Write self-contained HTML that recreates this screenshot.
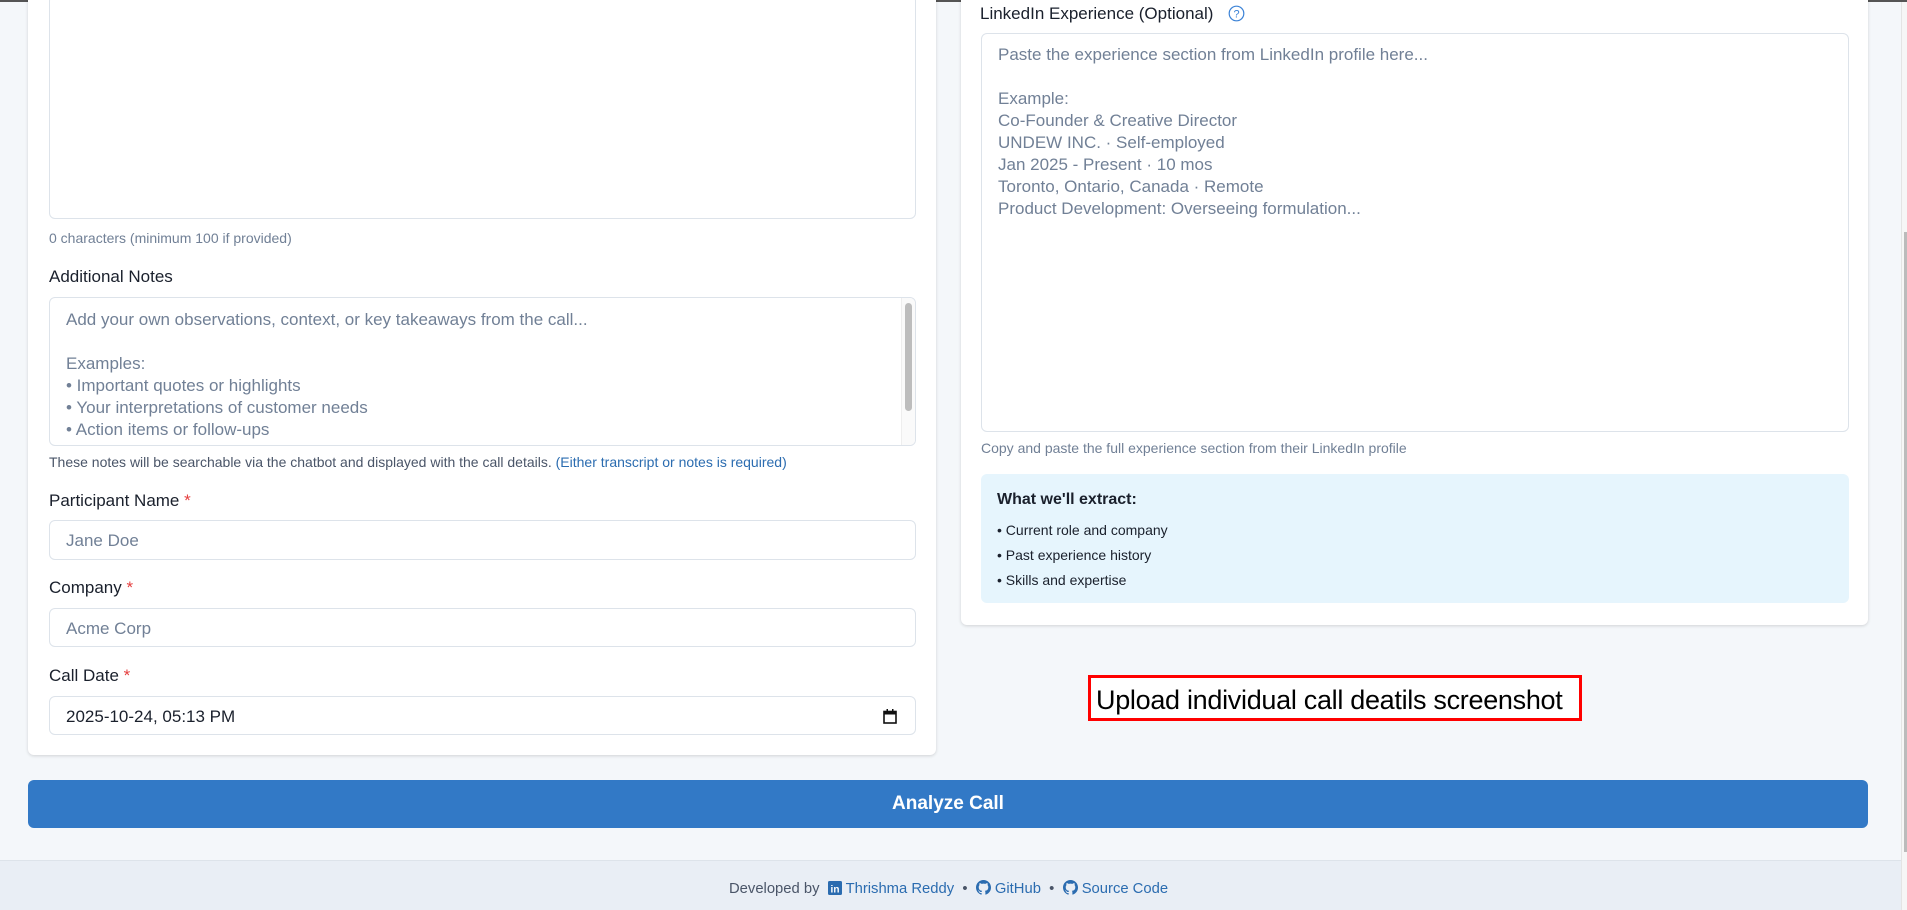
<!DOCTYPE html>
<html><head><meta charset="utf-8"><style>
*{box-sizing:border-box;margin:0;padding:0}
body{width:1907px;height:910px;overflow:hidden;background:#f4f7fa;font-family:"Liberation Sans",sans-serif;position:relative;color:#1a202c}
.a{position:absolute}
.card{background:#fff;border-radius:6px;box-shadow:0 1px 3px rgba(0,0,0,.15)}
.ta{border:1px solid #dde3ea;border-radius:6px;background:#fff}
.ph{color:#718096;font-size:17px;line-height:22px}
.lbl{font-size:17px;color:#1a202c}
.req{color:#e53e3e}
.help{font-size:14px;color:#4a5568}
</style></head><body>
<div class="a" style="left:0;top:0;width:1907px;height:2px;background:#555"></div>
<div class="a" style="left:1901px;top:2px;width:6px;height:908px;background:#f6f6f6;border-left:1px solid #e4e4e4"></div>
<div class="a" style="left:1904px;top:232px;width:3px;height:620px;background:#bbb"></div>

<div class="a card" style="left:28px;top:-10px;width:908px;height:765px"></div>
<div class="a ta" style="left:49px;top:-5px;width:867px;height:224px"></div>
<div class="a help" style="left:49px;top:230px;color:#718096">0 characters (minimum 100 if provided)</div>
<div class="a lbl" style="left:49px;top:267px">Additional Notes</div>
<div class="a ta" style="left:49px;top:297px;width:867px;height:149px;overflow:hidden">
<div class="ph" style="position:absolute;left:16px;top:11px;white-space:pre">Add your own observations, context, or key takeaways from the call...

Examples:
• Important quotes or highlights
• Your interpretations of customer needs
• Action items or follow-ups
• Context not captured in the transcript</div>
<div style="position:absolute;right:0;top:0;width:14px;height:100%;background:#fafafa;border-left:1px solid #eee"></div>
<div style="position:absolute;right:3px;top:5px;width:7px;height:108px;background:#bdbdbd;border-radius:4px"></div>
</div>
<div class="a help" style="left:49px;top:454px">These notes will be searchable via the chatbot and displayed with the call details. <span style="color:#2b6cb0">(Either transcript or notes is required)</span></div>
<div class="a lbl" style="left:49px;top:491px">Participant Name <span class="req">*</span></div>
<div class="a ta" style="left:49px;top:520px;width:867px;height:40px"><div class="ph" style="position:absolute;left:16px;top:9px">Jane Doe</div></div>
<div class="a lbl" style="left:49px;top:578px">Company <span class="req">*</span></div>
<div class="a ta" style="left:49px;top:608px;width:867px;height:39px"><div class="ph" style="position:absolute;left:16px;top:9px">Acme Corp</div></div>
<div class="a lbl" style="left:49px;top:666px">Call Date <span class="req">*</span></div>
<div class="a ta" style="left:49px;top:696px;width:867px;height:39px"><div style="position:absolute;left:16px;top:9px;font-size:17px;line-height:22px;color:#1a202c">2025-10-24, 05:13 PM</div>
<svg style="position:absolute;right:18px;top:12px" width="14" height="15" viewBox="0 0 14 15"><rect x="1" y="2.5" width="12" height="11.5" fill="none" stroke="#111" stroke-width="1.6"/><rect x="1" y="2.5" width="12" height="3" fill="#111"/><rect x="3.5" y="0" width="1.5" height="3" fill="#111"/><rect x="9" y="0" width="1.5" height="3" fill="#111"/></svg></div>

<div class="a card" style="left:961px;top:-10px;width:907px;height:635px"></div>
<div class="a lbl" style="left:980px;top:4px">LinkedIn Experience (Optional)</div>
<svg class="a" style="left:1228px;top:5px" width="17" height="17" viewBox="0 0 17 17"><circle cx="8.5" cy="8.5" r="7.3" fill="none" stroke="#3b82d6" stroke-width="1.2"/><text x="8.5" y="12.5" font-size="11" text-anchor="middle" fill="#3b82d6" font-family="Liberation Sans">?</text></svg>
<div class="a ta" style="left:981px;top:33px;width:868px;height:399px"><div class="ph" style="position:absolute;left:16px;top:10px;white-space:pre">Paste the experience section from LinkedIn profile here...

Example:
Co-Founder &amp; Creative Director
UNDEW INC. · Self-employed
Jan 2025 - Present · 10 mos
Toronto, Ontario, Canada · Remote
Product Development: Overseeing formulation...</div></div>
<div class="a help" style="left:981px;top:440px;color:#718096">Copy and paste the full experience section from their LinkedIn profile</div>
<div class="a" style="left:981px;top:474px;width:868px;height:129px;background:#e6f5fd;border-radius:6px">
<div style="position:absolute;left:16px;top:17px;font-size:16px;font-weight:bold">What we'll extract:</div>
<div style="position:absolute;left:16px;top:44px;font-size:14px;line-height:25px">• Current role and company<br>• Past experience history<br>• Skills and expertise</div>
</div>

<div class="a" style="left:1088px;top:675px;width:494px;height:46px;border:3px solid #f00;background:#fff"><div style="position:absolute;left:5px;top:7px;font-size:27px;color:#000;white-space:nowrap;letter-spacing:-0.3px">Upload individual call deatils screenshot</div></div>

<div class="a" style="left:28px;top:780px;width:1840px;height:48px;background:#3279c6;border-radius:6px;color:#fff;font-size:19px;font-weight:bold;text-align:center;line-height:48px">Analyze Call</div>

<div class="a" style="left:0;top:860px;width:1901px;height:50px;background:#e9eef5;border-top:1px solid #dde3ea"></div>
<div class="a" style="left:729px;top:880px;font-size:14.8px;color:#4a5568;white-space:nowrap">Developed by&nbsp; <svg width="14" height="14" viewBox="0 0 14 14" style="vertical-align:-2px"><rect width="14" height="14" rx="1.5" fill="#2b6cb0"/><text x="7" y="11.5" font-size="10" font-weight="bold" text-anchor="middle" fill="#fff" font-family="Liberation Sans">in</text></svg> <span style="color:#2b6cb0">Thrishma Reddy</span> &nbsp;•&nbsp; <svg width="15" height="15" viewBox="0 0 16 16" style="vertical-align:-2px"><path fill="#2b6cb0" d="M8 0C3.58 0 0 3.58 0 8c0 3.54 2.29 6.53 5.47 7.59.4.07.55-.17.55-.38v-1.34c-2.23.48-2.7-1.07-2.7-1.07-.36-.92-.89-1.17-.89-1.17-.73-.5.06-.49.06-.49.8.06 1.23.83 1.23.83.71 1.22 1.87.87 2.33.66.07-.52.28-.87.51-1.07-1.78-.2-3.64-.89-3.64-3.95 0-.87.31-1.59.82-2.15-.08-.2-.36-1.02.08-2.12 0 0 .67-.21 2.2.82a7.6 7.6 0 0 1 4 0c1.53-1.04 2.2-.82 2.2-.82.44 1.1.16 1.92.08 2.12.51.56.82 1.27.82 2.15 0 3.07-1.87 3.75-3.65 3.95.29.25.54.73.54 1.48v2.2c0 .21.15.46.55.38A8 8 0 0 0 16 8c0-4.42-3.58-8-8-8z"/></svg> <span style="color:#2b6cb0">GitHub</span> &nbsp;•&nbsp; <svg width="15" height="15" viewBox="0 0 16 16" style="vertical-align:-2px"><path fill="#2b6cb0" d="M8 0C3.58 0 0 3.58 0 8c0 3.54 2.29 6.53 5.47 7.59.4.07.55-.17.55-.38v-1.34c-2.23.48-2.7-1.07-2.7-1.07-.36-.92-.89-1.17-.89-1.17-.73-.5.06-.49.06-.49.8.06 1.23.83 1.23.83.71 1.22 1.87.87 2.33.66.07-.52.28-.87.51-1.07-1.78-.2-3.64-.89-3.64-3.95 0-.87.31-1.59.82-2.15-.08-.2-.36-1.02.08-2.12 0 0 .67-.21 2.2.82a7.6 7.6 0 0 1 4 0c1.53-1.04 2.2-.82 2.2-.82.44 1.1.16 1.92.08 2.12.51.56.82 1.27.82 2.15 0 3.07-1.87 3.75-3.65 3.95.29.25.54.73.54 1.48v2.2c0 .21.15.46.55.38A8 8 0 0 0 16 8c0-4.42-3.58-8-8-8z"/></svg> <span style="color:#2b6cb0">Source Code</span></div>
</body></html>
